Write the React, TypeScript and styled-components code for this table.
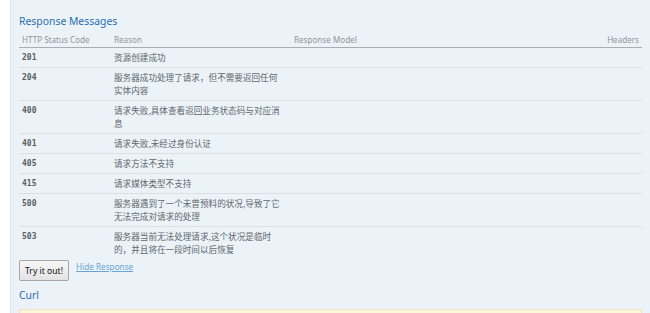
import React from 'react'
import styled, { createGlobalStyle } from 'styled-components'

const GlobalStyle = createGlobalStyle`
  html, body {
    margin: 0;
    padding: 0;
    background: #ffffff;
  }
  body {
    font-family: 'Noto Sans', 'Noto Sans CJK SC', sans-serif;
  }
`

type ResponseMessage = {
  code: string
  reason: string
}

const messages: ResponseMessage[] = [
  { code: '201', reason: '资源创建成功' },
  { code: '204', reason: '服务器成功处理了请求，但不需要返回任何实体内容' },
  { code: '400', reason: '请求失败,具体查看返回业务状态码与对应消息' },
  { code: '401', reason: '请求失败,未经过身份认证' },
  { code: '405', reason: '请求方法不支持' },
  { code: '415', reason: '请求媒体类型不支持' },
  { code: '500', reason: '服务器遇到了一个未曾预料的状况,导致了它无法完成对请求的处理' },
  { code: '503', reason: '服务器当前无法处理请求,这个状况是临时的，并且将在一段时间以后恢复' },
]

const App: React.FC = () => {
  return (
    <>
      <GlobalStyle />
      <Page>
        <Content>
          <SectionTitle>Response Messages</SectionTitle>
          <Table>
            <colgroup>
              <col style={{ width: 92 }} />
              <col style={{ width: 180 }} />
              <col />
              <col />
            </colgroup>
            <thead>
              <tr>
                <Th>HTTP Status Code</Th>
                <Th>Reason</Th>
                <Th>Response Model</Th>
                <Th $align="right">Headers</Th>
              </tr>
            </thead>
            <tbody>
              {messages.map((m) => (
                <Row key={m.code}>
                  <CodeCell>{m.code}</CodeCell>
                  <ReasonCell>{m.reason}</ReasonCell>
                  <Td />
                  <Td />
                </Row>
              ))}
            </tbody>
          </Table>
          <SandboxBar>
            <TryButton type="button">Try it out!</TryButton>
            <HideLink href="#">Hide Response</HideLink>
          </SandboxBar>
          <SectionTitle $gap>Curl</SectionTitle>
          <CurlBox />
        </Content>
      </Page>
    </>
  )
}

export default App

const Page = styled.div`
  padding-left: 10px;
  height: 313px;
  overflow: hidden;
`

const Content = styled.div`
  height: 100%;
  box-sizing: border-box;
  background: #ebf3f9;
  border-left: 1px solid #dde7f1;
  padding: 13px 8px 0 8px;
`

const SectionTitle = styled.h4<{ $gap?: boolean }>`
  margin: ${(p) => (p.$gap ? '6px 0 6px' : '0 0 1px')};
  font-size: 10.4px;
  line-height: 16px;
  font-weight: normal;
  color: #2a6db1;
`

const Table = styled.table`
  width: 100%;
  table-layout: fixed;
  border-collapse: collapse;
  font-size: 8.6px;
`

const Th = styled.th<{ $align?: 'left' | 'right' }>`
  padding: 3px 3px 1px;
  line-height: 13px;
  font-size: 8.1px;
  text-align: ${(p) => p.$align ?? 'left'};
  font-weight: normal;
  color: #90959b;
  border-bottom: 1px solid #a9adb2;
`

const Row = styled.tr`
  border-bottom: 1px solid #d9dfe5;

  &:last-child {
    border-bottom: none;
  }
`

const Td = styled.td`
  padding: 3px;
  line-height: 13px;
  vertical-align: top;
`

const CodeCell = styled(Td)`
  font-family: 'DejaVu Sans Mono', monospace;
  font-size: 8px;
  font-weight: bold;
  color: #5a5d61;
`

const ReasonCell = styled(Td)`
  padding-right: 8px;
  font-family: 'Noto Sans CJK SC', sans-serif;
  color: #62666b;
`

const SandboxBar = styled.div`
  display: flex;
  align-items: flex-start;
  gap: 7px;
  margin-top: 1px;
`

const TryButton = styled.button`
  width: 50px;
  height: 21px;
  margin: 0;
  padding: 0;
  font-family: 'Noto Sans', sans-serif;
  font-size: 8.6px;
  color: #111;
  background: linear-gradient(#f7f7f7, #e3e3e3);
  border: 1px solid #a6a6a6;
  border-radius: 2px;
`

const HideLink = styled.a`
  font-size: 8.2px;
  line-height: 13px;
  color: #6aa3d6;
  text-decoration: underline;
`

const CurlBox = styled.div`
  height: 40px;
  background: #fcf6db;
  border: 1px solid #ece4bd;
`
